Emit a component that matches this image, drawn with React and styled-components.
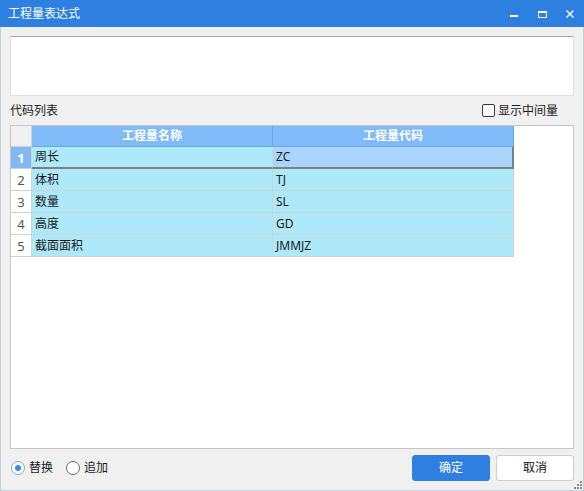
import React from "react";
import styled, { createGlobalStyle } from "styled-components";

const GlobalStyle = createGlobalStyle`
  html, body {
    margin: 0;
    padding: 0;
  }
  body {
    font-family: "Noto Sans", "Noto Sans CJK SC", sans-serif;
    font-size: 12px;
    color: #1a1a1a;
  }
`;

const Window = styled.div`
  width: 584px;
  height: 491px;
  display: flex;
  flex-direction: column;
  background: #f0f0f0;
  position: relative;
`;

const TitleBar = styled.div`
  height: 27px;
  flex: none;
  background: #2d7fe0;
  color: #fff;
  display: flex;
  align-items: center;
  padding-left: 8px;
  font-size: 12px;
  line-height: 1;
`;

const Controls = styled.div`
  margin-left: auto;
  display: flex;
  height: 100%;
`;

const ControlButton = styled.div`
  width: 28px;
  height: 100%;
  display: flex;
  align-items: center;
  justify-content: center;
`;

const Body = styled.div`
  flex: 1;
  display: flex;
  flex-direction: column;
  padding: 9px 9px 0 9px;
  border: 1px solid #c4cfdc;
  border-top: none;
  min-height: 0;
`;

const Editor = styled.div`
  height: 60px;
  flex: none;
  background: #fff;
  border: 1px solid #e0e0e0;
  border-top-color: #a8a8a8;
  box-sizing: border-box;
`;

const LabelRow = styled.div`
  height: 29px;
  flex: none;
  display: flex;
  align-items: center;
  justify-content: space-between;
  padding-right: 16px;
  line-height: 14px;
`;

const CheckLabel = styled.label`
  display: flex;
  align-items: center;
  gap: 3px;
`;

const CheckBox = styled.span`
  width: 13px;
  height: 13px;
  box-sizing: border-box;
  border: 1px solid #3a3a3a;
  border-radius: 2px;
  background: #fff;
`;

const Frame = styled.div`
  height: 324px;
  flex: none;
  box-sizing: border-box;
  border: 1px solid #c6c6c6;
  background: #fff;
`;

const Row = styled.div`
  display: flex;
`;

const Cell = styled.div`
  box-sizing: content-box;
  width: ${p => p.w}px;
  height: ${p => p.h || 21}px;
  display: flex;
  align-items: center;
  padding-left: 3px;
  background: ${p => p.bg || "#aee9fa"};
  border-right: ${p => p.br || "1px solid #d2d2d2"};
  border-bottom: ${p => p.bb || "1px solid #d2d2d2"};
  white-space: nowrap;
  line-height: 14px;
`;

const HeadCell = styled.div`
  width: ${p => p.w}px;
  height: 20px;
  display: flex;
  align-items: center;
  justify-content: center;
  background: ${p => (p.corner ? "#f0f0f0" : "#80bbf8")};
  color: #fff;
  font-weight: bold;
  border-right: 1px solid ${p => (p.corner ? "#d2d2d2" : "#6aa8ec")};
  border-bottom: 1px solid ${p => (p.corner ? "#d2d2d2" : "#6aa8ec")};
  line-height: 14px;
`;

const RowHead = styled.div`
  width: 20px;
  height: 21px;
  display: flex;
  align-items: center;
  justify-content: center;
  background: ${p => (p.active ? "#80b9f5" : "#fff")};
  color: ${p => (p.active ? "#fff" : "#555")};
  font-weight: ${p => (p.active ? "bold" : "normal")};
  font-size: 13px;
  border-right: 1px solid #d2d2d2;
  border-bottom: 1px solid #d2d2d2;
  line-height: 14px;
`;

const Footer = styled.div`
  flex: 1;
  display: flex;
  justify-content: space-between;
  align-items: flex-start;
  padding-top: 6px;
`;

const RadioGroup = styled.div`
  display: flex;
  align-items: center;
  height: 26px;
  padding-left: 1px;
  gap: 13px;
`;

const RadioLabel = styled.label`
  display: flex;
  align-items: center;
  gap: 4px;
  line-height: 14px;
`;

const Radio = styled.span`
  width: 14px;
  height: 14px;
  box-sizing: border-box;
  border-radius: 50%;
  border: 1px solid ${p => (p.checked ? "#8aa6c4" : "#6a6a6a")};
  background: #fff;
  display: flex;
  align-items: center;
  justify-content: center;

  &::after {
    content: "";
    display: ${p => (p.checked ? "block" : "none")};
    width: 6px;
    height: 6px;
    border-radius: 50%;
    background: #3a8ee8;
  }
`;

const Buttons = styled.div`
  display: flex;
  gap: 6px;
`;

const Button = styled.div`
  width: 78px;
  height: 26px;
  box-sizing: border-box;
  border-radius: 3px;
  display: flex;
  align-items: center;
  justify-content: center;
  background: ${p => (p.primary ? "#2d7fe0" : "#fff")};
  color: ${p => (p.primary ? "#fff" : "#111")};
  border: 1px solid ${p => (p.primary ? "#2d7fe0" : "#cdcdcd")};
  line-height: 14px;
`;

const Grip = styled.svg`
  position: absolute;
  right: 2px;
  bottom: 2px;
`;

const rows = [
  ["周长", "ZC"],
  ["体积", "TJ"],
  ["数量", "SL"],
  ["高度", "GD"],
  ["截面面积", "JMMJZ"],
];

export default function App() {
  return (
    <>
      <GlobalStyle />
      <Window>
        <TitleBar>
          工程量表达式
          <Controls>
            <ControlButton>
              <svg width="10" height="10" viewBox="0 0 10 10">
                <rect x="1" y="6" width="8" height="2" fill="#fff" />
              </svg>
            </ControlButton>
            <ControlButton>
              <svg width="10" height="10" viewBox="0 0 10 10">
                <rect x="1.5" y="2.5" width="8" height="6" fill="none" stroke="#fff" />
                <rect x="1" y="2" width="9" height="2" fill="#fff" />
              </svg>
            </ControlButton>
            <ControlButton>
              <svg width="10" height="10" viewBox="0 0 10 10">
                <path d="M1.5 1.5 L8.5 8.5 M8.5 1.5 L1.5 8.5" stroke="#fff" strokeWidth="1.4" />
              </svg>
            </ControlButton>
          </Controls>
        </TitleBar>
        <Body>
          <Editor />
          <LabelRow>
            <span>代码列表</span>
            <CheckLabel>
              <CheckBox />
              显示中间量
            </CheckLabel>
          </LabelRow>
          <Frame>
            <Row>
              <HeadCell w={20} corner />
              <HeadCell w={240}>工程量名称</HeadCell>
              <HeadCell w={240}>工程量代码</HeadCell>
            </Row>
            {rows.map(([name, code], i) => {
              const active = i === 0;
              return (
                <Row key={code}>
                  <RowHead active={active}>{i + 1}</RowHead>
                  <Cell
                    w={237}
                    h={active ? 20 : 21}
                    bb={active ? "2px solid #7f7f7f" : undefined}
                  >
                    {name}
                  </Cell>
                  <Cell
                    w={active ? 236 : 237}
                    h={active ? 20 : 21}
                    bg={active ? "#aad4fc" : undefined}
                    bb={active ? "2px solid #7f7f7f" : undefined}
                    br={active ? "2px solid #7f7f7f" : undefined}
                  >
                    {code}
                  </Cell>
                </Row>
              );
            })}
          </Frame>
          <Footer>
            <RadioGroup>
              <RadioLabel>
                <Radio checked />
                替换
              </RadioLabel>
              <RadioLabel>
                <Radio />
                追加
              </RadioLabel>
            </RadioGroup>
            <Buttons>
              <Button primary>确定</Button>
              <Button>取消</Button>
            </Buttons>
          </Footer>
        </Body>
        <Grip width="8" height="8" viewBox="0 0 8 8">
          <rect x="6" y="0" width="2" height="2" fill="#8a8a8a" />
          <rect x="3" y="3" width="2" height="2" fill="#8a8a8a" />
          <rect x="6" y="3" width="2" height="2" fill="#8a8a8a" />
          <rect x="0" y="6" width="2" height="2" fill="#8a8a8a" />
          <rect x="3" y="6" width="2" height="2" fill="#8a8a8a" />
          <rect x="6" y="6" width="2" height="2" fill="#8a8a8a" />
        </Grip>
      </Window>
    </>
  );
}
